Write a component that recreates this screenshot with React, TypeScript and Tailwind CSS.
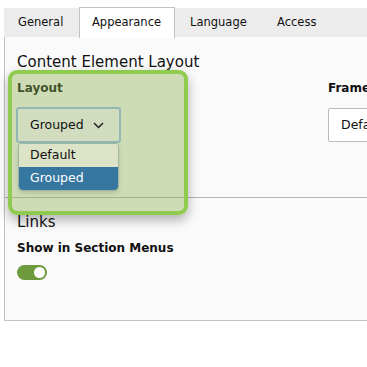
import React from "react";

export default function App() {
  return (
    <div
      className="relative w-[367px] h-[367px] overflow-hidden bg-white text-[#111]"
      style={{ fontFamily: '"DejaVu Sans", Verdana, sans-serif' }}
    >
      {/* Tabs */}
      <div className="mt-[8px] ml-[4px] flex h-[30px] bg-[#ececec] border-b border-[#c3c3c3] text-[11.5px]">
        <div className="flex items-center pl-[14px] w-[75px] shrink-0">General</div>
        <div className="flex items-center pl-[12px] w-[96px] shrink-0 h-[31px] -mt-[1px] bg-white border border-b-0 border-[#c3c3c3] relative z-[1]">
          Appearance
        </div>
        <div className="flex items-center pl-[15px] w-[87px] shrink-0">Language</div>
        <div className="flex items-center pl-[15px]">Access</div>
      </div>

      {/* Panel */}
      <div className="ml-[4px] -mt-[1px] h-[284px] border-l border-b border-[#c3c3c3] bg-[#fafafa]">
        <div className="pl-[12px] pt-[15px]">
          <div className="text-[15px] leading-[20px]">Content Element Layout</div>
          <div className="mt-[8px] flex">
            <div className="w-[311px] shrink-0">
              <div className="text-[12px] font-bold leading-[16px]">Layout</div>
              <div className="relative z-20 mt-[11px] ml-[-1px] w-[105px] h-[36px] rounded-[3px] border-2 border-[#93b8b4] bg-[#d2dcbf] flex items-center pl-[12px] text-[12.5px]">
                <span>Grouped</span>
                <svg className="ml-[9px]" width="11" height="7" viewBox="0 0 11 7">
                  <path d="M1 1 L5.5 5.5 L10 1" fill="none" stroke="#222" strokeWidth="1.5" />
                </svg>
                <div className="absolute left-[0px] top-[34px] w-[101px] rounded-b-[5px] rounded-t-[3px] overflow-hidden border border-[#9db7a3] text-[12.5px] shadow-[0_2px_4px_rgba(0,0,0,0.15)]">
                  <div className="h-[23px] bg-[#dde3c7] flex items-center pl-[11px]">Default</div>
                  <div className="h-[23px] bg-[#3677a1] text-white flex items-center pl-[11px]">Grouped</div>
                </div>
              </div>
            </div>
            <div className="shrink-0">
              <div className="text-[12px] font-bold leading-[16px]">Frame</div>
              <div className="mt-[12px] w-[80px] h-[34px] border border-[#bbbbbb] bg-white rounded-[2px] flex items-center pl-[12px] text-[12.5px]">
                Default
              </div>
            </div>
          </div>
        </div>

        <div className="mt-[54px] border-t border-[#b5b5b5]" />

        <div className="pl-[12px] pt-[14px]">
          <div className="text-[15px] leading-[20px]">Links</div>
          <div className="mt-[8px] text-[12px] font-bold leading-[16px]">Show in Section Menus</div>
          <div className="mt-[9px] w-[30px] h-[15px] rounded-full bg-[#6c9a3d] flex items-center justify-end pr-[2px]">
            <div className="w-[11px] h-[11px] rounded-full bg-white" />
          </div>
        </div>
      </div>

      {/* Highlight overlay */}
      <div className="absolute left-[8px] top-[70px] w-[180px] h-[145px] rounded-[9px] border-4 border-[#8fcb4e] bg-[rgba(140,175,80,0.4)] shadow-[0_5px_12px_rgba(0,0,0,0.3)] z-10" />
    </div>
  );
}
